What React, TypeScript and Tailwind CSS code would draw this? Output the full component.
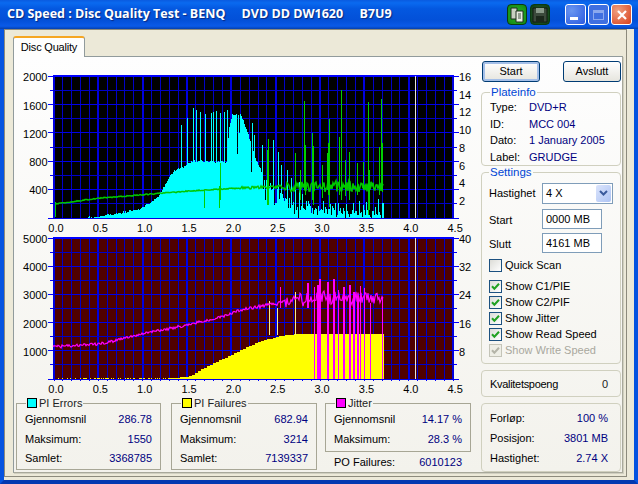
import type { ReactNode } from 'react';

const FONT = "font-['Liberation_Sans',Arial,sans-serif]";

// chart geometry, in page pixels
const PLOT_L = 53;
const PLOT_R = 454;
const PX_PER_TENTH = 8.87;
const X0 = 54;
const TOP1 = 76;
const BOT1 = 218;
const TOP2 = 238;
const BOT2 = 379;

let seed = 1234;
const rnd = () => {
  seed = (seed * 16807) % 2147483647;
  return seed / 2147483647;
};

const interp = (pts: number[][], x: number) => {
  for (let i = 1; i < pts.length; i++) {
    if (x <= pts[i][0]) {
      const [x0, y0] = pts[i - 1];
      const [x1, y1] = pts[i];
      return y0 + ((y1 - y0) * (x - x0)) / (x1 - x0);
    }
  }
  return pts[pts.length - 1][1];
};

const cyanEnv = [[53, 218], [80, 217.5], [100, 215], [120, 212], [140, 208], [157, 197], [163, 187], [173, 170], [183, 166], [193, 160], [226, 161], [229, 125], [232, 114], [240, 113], [245, 125], [250, 140], [256, 160], [262, 172], [273, 183], [287, 196], [300, 203], [320, 206], [340, 208], [365, 209], [383, 210]];
const cyanSpikes: Record<number, number> = { 181: 125, 187: 118, 193: 108, 196: 110, 200: 112, 205: 114, 211: 113, 213: 112, 216: 111, 220: 113, 224: 112, 227: 110, 252: 123, 254: 135, 262: 145, 273: 140, 278: 152, 281: 165, 287: 170, 291: 178, 295: 180, 299: 182 };

const greenLine = [[55, 204], [100, 198], [140, 195], [190, 191], [240, 188], [300, 186], [383, 186]];
const greenSpikes = [[55, 202, 217], [204, 190, 208], [219, 186, 208], [220, 163, 200], [268, 139, 205], [267, 150, 205], [295, 153, 190], [304, 101, 190], [305, 145, 195], [312, 133, 200], [313, 146, 205], [328, 143, 195], [329, 119, 207], [327, 153, 190], [339, 137, 195], [341, 90, 200], [349, 152, 200], [357, 163, 195], [363, 162, 190], [368, 102, 215], [369, 170, 210], [379, 147, 195], [381, 99, 190], [382, 143, 192], [300, 170, 200], [322, 165, 198], [345, 160, 196]];

const yellowEnv = [[53, 378], [175, 378], [190, 376], [200, 370], [215, 362], [231, 355], [240, 350], [260, 341], [280, 336], [295, 334], [383, 334]];
const jitterLine = [[53, 347], [100, 344], [142, 334], [187, 325], [220, 317], [240, 310], [268, 305], [285, 302], [300, 300], [320, 298], [340, 298], [383, 300]];
const jitterTall = [[314, 287], [317, 285], [319, 279], [327, 282], [333, 279], [338, 290], [343, 287], [349, 285], [353, 292], [357, 297], [360, 286], [364, 288], [370, 303], [382, 297], [280, 287], [307, 283]];

const cyanPath = () => {
  let d = '';
  for (let x = PLOT_L + 1; x <= 383; x++) {
    let top = interp(cyanEnv, x) + rnd() * (x > 262 ? 10 : 2);
    if (x > 300 && rnd() > 0.7) top -= rnd() * 14;
    if (x > 262 && x < 300 && rnd() > 0.6) top += rnd() * 18;
    if (x > 228 && x < 252 && rnd() > 0.72) top += 14 + rnd() * 30;
    if (cyanSpikes[x]) top = cyanSpikes[x];
    d += `M${x + 0.5} ${BOT1}V${Math.round(Math.min(top, BOT1))}`;
  }
  return d;
};

const greenPath = () => {
  let d = '';
  for (let x = 55; x <= 383; x++) {
    const amp = x < 240 ? 1 : x < 285 ? 3 : 12;
    const y = interp(greenLine, x) + (rnd() - 0.5) * amp;
    d += `${x === 55 ? 'M' : 'L'}${x} ${y.toFixed(1)}`;
  }
  return d;
};

const yellowPath = () => {
  let d = '';
  for (let x = 54; x <= 383; x++) {
    if (x < 170 && rnd() < 0.55) continue;
    const top = interp(yellowEnv, x - x % 3);
    d += `M${x + 0.5} ${BOT2}V${Math.round(top)}`;
  }
  return d;
};

const jitterPath = () => {
  let d = '';
  for (let x = 53; x <= 383; x++) {
    const amp = x < 250 ? 3 : x < 285 ? 4 : 14;
    const y = interp(jitterLine, x) + (rnd() - 0.5) * amp;
    d += `${x === 53 ? 'M' : 'L'}${x} ${y.toFixed(1)}`;
  }
  return d;
};

const CYAN = cyanPath();
const GREEN = greenPath();
const YELLOW = yellowPath();
const JITTER = jitterPath();

const AXIS = 'font-["Liberation_Sans",Arial,sans-serif] text-[11px] fill-black';

function Plot({ top, bottom, rows, bg, left, right, ticks }: { top: number; bottom: number; rows: number; bg: string; left: [string, number][]; right: [string, number][]; ticks: boolean }) {
  const h = bottom - top;
  const lines = [];
  for (let i = 0; i <= 45; i++) {
    const x = X0 + i * PX_PER_TENTH;
    lines.push(<line key={`v${i}`} x1={x} x2={x} y1={top} y2={bottom} stroke={i % 5 === 0 ? '#0000e0' : '#0000c8'} strokeWidth={i % 5 === 0 ? 2 : 1} />);
    if (ticks) lines.push(<line key={`t${i}`} x1={x} x2={x} y1={bottom} y2={bottom + 2} stroke="#0000ff" />);
  }
  for (let i = 0; i <= rows; i++) {
    const y = top + (i * h) / rows;
    lines.push(<line key={`h${i}`} x1={PLOT_L} x2={PLOT_R} y1={y} y2={y} stroke={i % 2 ? '#0000c8' : '#0000e8'} />);
    lines.push(<line key={`l${i}`} x1={i % 2 ? 50 : 48} x2={PLOT_L} y1={y} y2={y} stroke="#0000ff" />);
    lines.push(<line key={`r${i}`} x1={PLOT_R} x2={i % 2 ? 457 : 459} y1={y} y2={y} stroke="#0000ff" />);
  }
  return (
    <g>
      <g shapeRendering="crispEdges">
        <rect x={PLOT_L} y={top} width={PLOT_R - PLOT_L} height={h} fill={bg} />
        {lines}
        <line x1={PLOT_L} x2={PLOT_R} y1={top} y2={top} stroke="#0000ff" strokeWidth={2} />
      </g>
      {left.map(([t, y]) => (
        <text key={t} x={47.5} y={y + 4.5} textAnchor="end" className={AXIS}>{t}</text>
      ))}
      {right.map(([t, y]) => (
        <text key={t} x={459} y={y + 4.5} className={AXIS}>{t}</text>
      ))}
      {['0.0', '0.5', '1.0', '1.5', '2.0', '2.5', '3.0', '3.5', '4.0', '4.5'].map((t, i) => (
        <text key={t} x={X0 + 2 + i * 5 * PX_PER_TENTH} y={bottom + 13.5} textAnchor="middle" className={AXIS}>{t}</text>
      ))}
    </g>
  );
}

function Charts() {
  return (
    <svg viewBox="14 64 466 334" width={466} height={334} className="block shrink-0">
      <Plot top={TOP1} bottom={BOT1} rows={10} bg="#000000" ticks={false}
        left={[['2000', 76], ['1600', 105], ['1200', 133], ['800', 161], ['400', 189]]}
        right={[['16', 76], ['14', 94], ['12', 111], ['10', 129], ['8', 147], ['6', 165], ['4', 182], ['2', 200]]} />
      <path d={CYAN} stroke="#00ffff" fill="none" shapeRendering="crispEdges" />
      <path d={GREEN} stroke="#00c800" strokeWidth={1.5} fill="none" />
      <g shapeRendering="crispEdges">
        {greenSpikes.map(([x, a, b], i) => (
          <line key={i} x1={x + 0.5} x2={x + 0.5} y1={a} y2={b} stroke="#00d000" />
        ))}
        <line x1={415.5} x2={415.5} y1={TOP1} y2={BOT1} stroke="#e8e4d8" />
      </g>

      <Plot top={TOP2} bottom={BOT2} rows={10} bg="#500000" ticks
        left={[['5000', 238], ['4000', 266], ['3000', 294], ['2000', 323], ['1000', 351]]}
        right={[['40', 238], ['32', 266], ['24', 294], ['16', 323], ['8', 351]]} />
      <path d={YELLOW} stroke="#ffff00" fill="none" shapeRendering="crispEdges" />
      <g shapeRendering="crispEdges">
        {[[269, 301], [277, 308], [295, 292]].map(([x, y]) => (
          <line key={x} x1={x + 0.5} x2={x + 0.5} y1={y} y2={335} stroke="#f4f090" />
        ))}
      </g>
      <path d={JITTER} stroke="#ff00ff" strokeWidth={1.2} fill="none" />
      <g shapeRendering="crispEdges">
        {jitterTall.map(([x, y]) => (
          <line key={x} x1={x + 0.5} x2={x + 0.5} y1={y} y2={x < 312 ? 308 : BOT2} stroke="#ff00ff" strokeWidth={x % 2 ? 2 : 1} />
        ))}
        <line x1={415.5} x2={415.5} y1={TOP2} y2={BOT2} stroke="#e8e4d8" />
      </g>
    </svg>
  );
}

function StatBox({ swatch, title, rows, className }: { swatch: string; title: string; rows: [string, string][]; className: string }) {
  return (
    <fieldset className={`border border-[#a7a695] px-[8px] ${className}`}>
      <legend className="ml-[1px] h-[14px] flex items-center gap-[2px] px-[1px] leading-none">
        <span className={`w-[10px] h-[10px] border border-black ${swatch}`} />
        <span className="text-[#222]">{title}</span>
      </legend>
      <div className="flex flex-col mt-[2px] gap-[4.5px]">
        {rows.map(([k, v]) => (
          <div key={k} className="flex justify-between h-[15px] leading-[15px]">
            <span className="whitespace-nowrap">{k}</span>
            <span className="text-[#00007f]">{v}</span>
          </div>
        ))}
      </div>
    </fieldset>
  );
}

function Group({ title, children, className }: { title?: string; children: ReactNode; className: string }) {
  return (
    <fieldset className={`border border-[#d0d0bf] rounded-[4px] w-[140px] ${className}`}>
      {title && <legend className="px-[1px] text-[#0046d5] text-[11.5px] leading-[13px]">{title}</legend>}
      {children}
    </fieldset>
  );
}

function Check({ label, on, off }: { label: string; on?: boolean; off?: boolean }) {
  return (
    <div className={`flex items-center gap-[3px] h-[13px] leading-none ${off ? 'text-[#a9a89e]' : ''}`}>
      <span className={`w-[13px] h-[13px] border flex items-center justify-center ${off ? 'border-[#c4c4b8] bg-[#eeeee6]' : 'border-[#1c5180] bg-linear-to-br from-[#dcdcd7] to-white'}`}>
        {on && (
          <svg viewBox="0 0 11 11" className="w-[11px] h-[11px]">
            <path d="M2 5.2 L4.4 7.8 L9 2.8" fill="none" stroke={off ? '#b4b4a8' : '#21a121'} strokeWidth="2" />
          </svg>
        )}
      </span>
      <span>{label}</span>
    </div>
  );
}

function Btn({ children, main }: { children: ReactNode; main?: boolean }) {
  return (
    <button className={`h-[21px] w-[58px] rounded-[3px] border border-[#003c74] bg-linear-to-b from-white to-[#e6e5de] leading-none ${main ? 'shadow-[inset_0_0_0_2px_#a4bfe8]' : ''}`}>
      {children}
    </button>
  );
}

function TextBox({ value }: { value: string }) {
  return (
    <input readOnly value={value} className="w-[60px] h-[20px] border border-[#7f9db9] bg-white px-[3px] outline-none" />
  );
}

function Row({ label, value }: { label: string; value: string }) {
  return (
    <div className="flex justify-between h-[14px] leading-[14px]">
      <span>{label}</span>
      <span className="text-[#00007f]">{value}</span>
    </div>
  );
}

function TitleButton({ children, className }: { children: ReactNode; className: string }) {
  return (
    <div className={`w-[21px] h-[21px] rounded-[3px] border border-white flex items-center justify-center ${className}`}>
      {children}
    </div>
  );
}

function ToolIcon({ children, className }: { children: ReactNode; className: string }) {
  return (
    <div className={`w-[20px] h-[21px] rounded-[4px] border border-[#0a3a10] flex items-center justify-center ${className}`}>
      {children}
    </div>
  );
}

export default function App() {
  return (
    <div className={`${FONT} w-[638px] h-[484px] flex flex-col text-[11px] text-black overflow-hidden bg-[#ece9d8]`}>
      {/* title bar */}
      <div className="h-[29px] shrink-0 flex items-center pl-[7px] pr-[6px] bg-[linear-gradient(180deg,#0a5be0_0%,#0a6af0_10%,#0458e0_30%,#0350d8_70%,#0a5ae8_90%,#0340b0_100%)]">
        <div className="flex-1 text-white font-['Open_Sans',sans-serif] font-bold text-[12.5px] whitespace-pre [text-shadow:1px_1px_1px_#0a2a80]">
          CD Speed : Disc Quality Test - BENQ     DVD DD DW1620     B7U9
        </div>
        <div className="flex gap-[3px] mr-[15px]">
          <ToolIcon className="bg-[radial-gradient(circle,#30b030,#108a10)]">
            <svg viewBox="0 0 16 16" className="w-[16px] h-[16px]">
              <path d="M2 1h6v11H2z" fill="#c8d0c0" stroke="#203020" />
              <path d="M7 4h7v11H7z" fill="#e8ece0" stroke="#203020" />
              <path d="M9 7h3M9 9h3M9 11h3" stroke="#405040" />
            </svg>
          </ToolIcon>
          <ToolIcon className="bg-[radial-gradient(circle,#2a6a30,#103a14)]">
            <svg viewBox="0 0 16 16" className="w-[16px] h-[16px]">
              <path d="M1 1h14v14H1z" fill="#3c4a3c" stroke="#101810" />
              <path d="M4 1h8v5H4z" fill="#8a9a8a" />
              <path d="M4 9h8v6H4z" fill="#1c281c" />
            </svg>
          </ToolIcon>
        </div>
        <div className="flex gap-[2px]">
          <TitleButton className="bg-[radial-gradient(circle_at_30%_30%,#6a96f0,#2a5ae0)]">
            <span className="w-[8px] h-[3px] bg-white mt-[8px] mr-[4px]" />
          </TitleButton>
          <TitleButton className="bg-[#3f6fe0] border-[#8aa8ee]">
            <span className="w-[11px] h-[10px] border border-[#8aa8ee] border-t-[3px]" />
          </TitleButton>
          <TitleButton className="bg-[radial-gradient(circle_at_30%_30%,#f0a080,#d8401c)]">
            <svg viewBox="0 0 12 12" className="w-[12px] h-[12px]">
              <path d="M2 2l8 8M10 2l-8 8" stroke="#fff" strokeWidth="2.2" />
            </svg>
          </TitleButton>
        </div>
      </div>

      {/* window body */}
      <div className="flex-1 flex flex-col border-x-4 border-b-4 border-x-[#0553e0] border-b-[#0338b0] pr-[7px] pb-[3px]">
        <div className="flex-1 flex flex-col border border-[#8c8a7c] pl-[8px] pr-[3px] pb-[3px] pt-[6px]">
          {/* tab */}
          <div className="h-[20px] shrink-0 flex">
            <div className="w-[72px] h-[21px] z-10 relative bg-[#fefefd] border-x border-[#919b9c] rounded-t-[3px] border-t-[2px] border-t-[#f5a623] text-center leading-[19px] tracking-[-0.2px]">
              Disc Quality
            </div>
          </div>
          {/* tab page */}
          <div className="flex-1 flex border border-[#919b9c] border-r-[#a8a89a] border-b-[#a8a89a] bg-linear-to-b from-[#fefefe] to-[#f3f2ec] shadow-[1px_1px_0_#d0cfc0]">
            <div className="w-[467px] shrink-0 flex flex-col pt-[7px]">
              <Charts />
              <div className="flex pl-[2px] -mt-[2px]">
                <StatBox swatch="bg-[#00ffff]" title="PI Errors" className="w-[145px] h-[74px]"
                  rows={[['Gjennomsnil', '286.78'], ['Maksimum:', '1550'], ['Samlet:', '3368785']]} />
                <StatBox swatch="bg-[#ffff00]" title="PI Failures" className="w-[146px] h-[74px] ml-[10px]"
                  rows={[['Gjennomsnil', '682.94'], ['Maksimum:', '3214'], ['Samlet:', '7139337']]} />
                <div className="w-[146px] ml-[8px] flex flex-col">
                  <StatBox swatch="bg-[#ff00ff]" title="Jitter" className="w-[146px] h-[56px]"
                    rows={[['Gjennomsnil', '14.17 %'], ['Maksimum:', '28.3 %']]} />
                  <div className="flex justify-between px-[9px] mt-[3px] h-[15px] leading-[15px]">
                    <span>PO Failures:</span>
                    <span className="text-[#00007f]">6010123</span>
                  </div>
                </div>
              </div>
            </div>

            <div className="flex-1 flex flex-col pt-[4px]">
              <div className="flex justify-between w-[139px] ml-[1px]">
                <Btn main>Start</Btn>
                <Btn>Avslutt</Btn>
              </div>
              <Group title="Plateinfo" className="mt-[4px] h-[80px] px-[8px]">
                <div className="flex flex-col gap-[2.5px] pt-[1px]">
                  {[['Type:', 'DVD+R'], ['ID:', 'MCC 004'], ['Dato:', '1 January 2005'], ['Label:', 'GRUDGE']].map(([k, v]) => (
                    <div key={k} className="flex h-[14px] leading-[14px]">
                      <span className="w-[39px]">{k}</span>
                      <span className="text-[#00007f]">{v}</span>
                    </div>
                  ))}
                </div>
              </Group>
              <Group title="Settings" className="h-[198px] px-[7px]">
                <div className="flex items-center h-[22px] mt-[3px]">
                  <span className="w-[53px]">Hastighet</span>
                  <div className="w-[71px] h-[21px] border border-[#7f9db9] bg-white flex items-center justify-between pl-[3px] pr-[1px]">
                    <span>4 X</span>
                    <span className="w-[15px] h-[17px] rounded-[2px] bg-linear-to-br from-[#dbe4fb] to-[#aec4f4] flex items-center justify-center">
                      <svg viewBox="0 0 9 6" className="w-[9px] h-[6px]">
                        <path d="M1 1l3.5 3.5L8 1" fill="none" stroke="#3a5a9c" strokeWidth="2" />
                      </svg>
                    </span>
                  </div>
                </div>
                <div className="flex items-center h-[20px] mt-[5px]">
                  <span className="w-[53px] pt-[2px]">Start</span>
                  <TextBox value="0000 MB" />
                </div>
                <div className="flex items-center h-[20px] mt-[4px]">
                  <span className="w-[53px] pt-[2px]">Slutt</span>
                  <TextBox value="4161 MB" />
                </div>
                <div className="mt-[6px]">
                  <Check label="Quick Scan" />
                </div>
                <div className="flex flex-col gap-[3px] mt-[8px]">
                  <Check on label="Show C1/PIE" />
                  <Check on label="Show C2/PIF" />
                  <Check on label="Show Jitter" />
                  <Check on label="Show Read Speed" />
                  <Check on off label="Show Write Speed" />
                </div>
              </Group>
              <Group className="mt-[6px] h-[27px] pl-[8px] pr-[12px] pt-[6px]">
                <div className="flex justify-between h-[14px] leading-[14px]">
                  <span className="tracking-[-0.3px] whitespace-nowrap">Kvalitetspoeng</span>
                  <span className="text-[#222]">0</span>
                </div>
              </Group>
              <Group className="mt-[6px] h-[69px] pl-[8px] pr-[12px] pt-[7px]">
                <div className="flex flex-col gap-[6px]">
                  <Row label="Forløp:" value="100 %" />
                  <Row label="Posisjon:" value="3801 MB" />
                  <Row label="Hastighet:" value="2.74 X" />
                </div>
              </Group>
            </div>
          </div>
        </div>
      </div>
    </div>
  );
}
